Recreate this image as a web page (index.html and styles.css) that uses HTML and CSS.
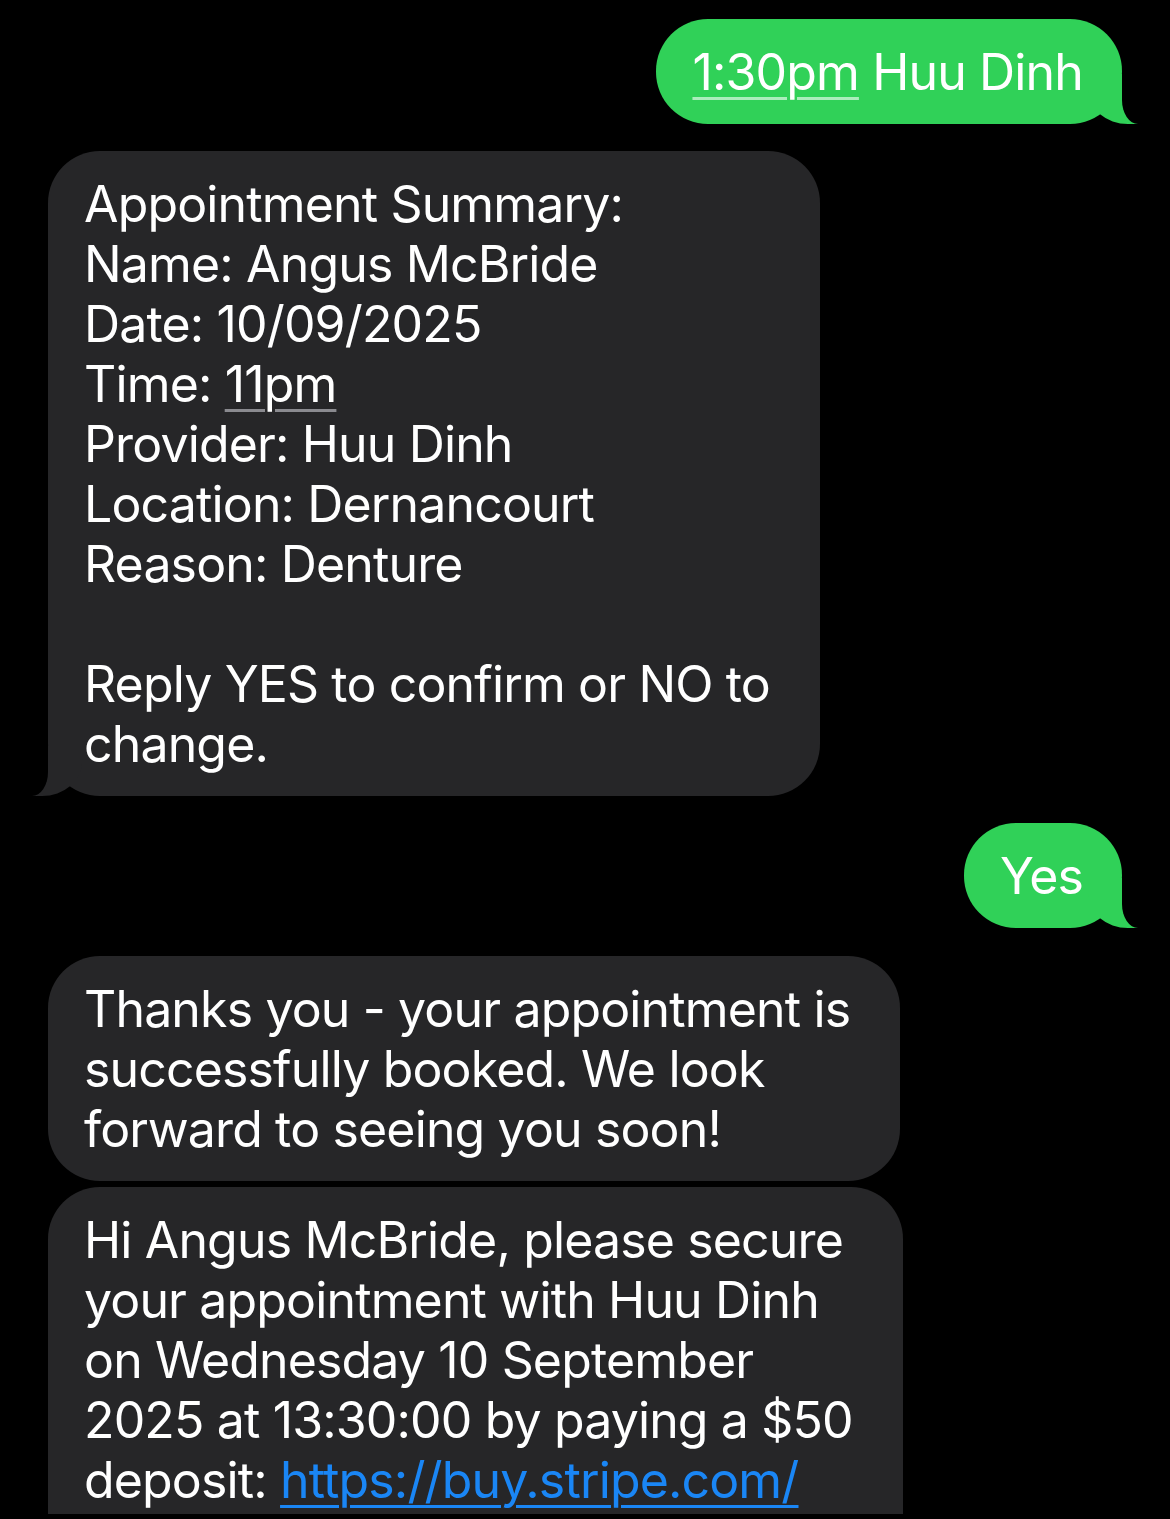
FILE: index.html
```html
<!DOCTYPE html>
<html lang="en">
<head>
<meta charset="utf-8">
<title>Messages</title>
<link rel="stylesheet" href="styles.css">
</head>
<body>
<main class="thread">
  <div class="bubble sent tail"><span class="detected">1:30pm</span> Huu Dinh</div>

  <div class="bubble received tail gap">
    Appointment Summary:<br>
    Name: Angus McBride<br>
    Date: 10/09/2025<br>
    Time: <span class="detected">11pm</span><br>
    Provider: Huu Dinh<br>
    Location: Dernancourt<br>
    Reason: Denture<br>
    <br>
    Reply YES to confirm or NO to<br>
    change.
  </div>

  <div class="bubble sent tail gap">Yes</div>

  <div class="bubble received gap-lg">
    Thanks you - your appointment is<br>
    successfully booked. We look<br>
    forward to seeing you soon!
  </div>

  <div class="bubble received tail gap-sm continues">
    Hi Angus McBride, please secure<br>
    your appointment with Huu Dinh<br>
    on Wednesday 10 September<br>
    2025 at 13:30:00 by paying a $50<br>
    deposit: <a class="link" href="#">https://buy.stripe.com/</a>
  </div>
</main>
</body>
</html>
```

FILE: styles.css
```css
html, body {
  margin: 0;
  padding: 0;
  background: #000;
}

body {
  font-family: Inter, "Noto Sans", "Liberation Sans", sans-serif;
}

.thread {
  box-sizing: border-box;
  height: 1514px;
  overflow: hidden;
  display: flex;
  flex-direction: column;
  padding: 19px 48px 0;
}

.bubble {
  position: relative;
  flex-shrink: 0;
  border-radius: 52px;
  font-size: 50px;
  line-height: 60px;
  letter-spacing: -0.85px;
  color: #fff;
  white-space: nowrap;
}

.gap { margin-top: 27px; }
.gap-lg { margin-top: 28px; }
.gap-sm { margin-top: 6px; }

.sent {
  align-self: flex-end;
  background: #30d158;
  padding: 23px 39px 22px 36px;
}

.received {
  align-self: flex-start;
  background: #262628;
  padding: 23px 50px 22px 36px;
}

.received.continues {
  padding-bottom: 90px;
}

/* bubble tails */
.tail::before,
.tail::after {
  content: "";
  position: absolute;
  bottom: 0;
  height: 50px;
}

.sent.tail::before {
  right: -16px;
  width: 50px;
  background: #30d158;
  border-bottom-left-radius: 40px 34px;
}

.sent.tail::after {
  right: -70px;
  width: 70px;
  background: #000;
  border-bottom-left-radius: 16px 24px;
}

.received.tail::before {
  left: -16px;
  width: 50px;
  background: #262628;
  border-bottom-right-radius: 40px 34px;
}

.received.tail::after {
  left: -70px;
  width: 70px;
  background: #000;
  border-bottom-right-radius: 16px 24px;
}

.detected {
  text-decoration: underline;
  text-decoration-thickness: 3px;
  text-underline-offset: 7px;
  text-decoration-skip-ink: auto;
}

.sent .detected {
  text-decoration-color: rgba(255, 255, 255, 0.6);
}

.received .detected {
  text-decoration-color: #8a8a8f;
}

.link {
  color: #1a86f5;
  text-decoration: underline;
  text-decoration-thickness: 3px;
  text-underline-offset: 7px;
}
```
